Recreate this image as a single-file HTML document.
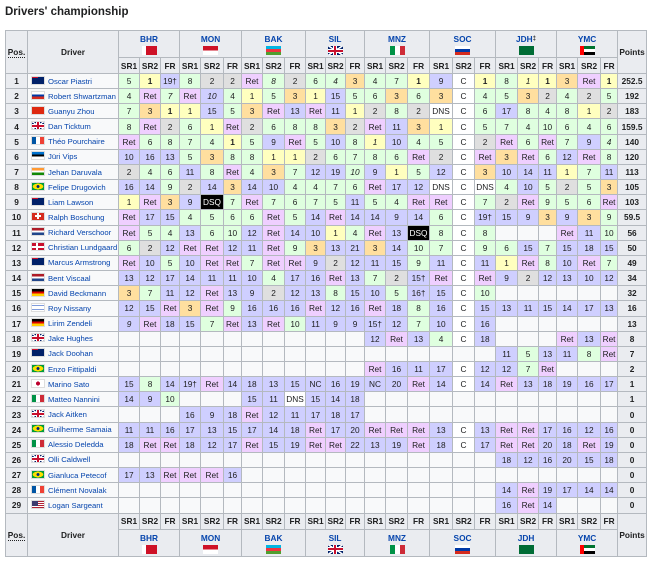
<!DOCTYPE html>
<html><head><meta charset="utf-8"><style>
*{margin:0;padding:0;box-sizing:border-box}
body{width:650px;height:562px;background:#fff;font-family:"Liberation Sans",Arial,sans-serif;color:#202122;overflow:hidden;position:relative}
h3{position:absolute;left:5px;top:6px;font-size:11.5px;font-weight:bold}
table{position:absolute;left:5px;top:30px;width:641px;border-collapse:collapse;table-layout:fixed;background:#f8f9fa;font-size:8.3px;line-height:10px}
td,th{border:1px solid #b4b9bf;text-align:center;padding:0;overflow:hidden;white-space:nowrap}
th{background:#eaecf0;font-weight:bold;font-size:8.3px}
tr.h1{height:27px} tr.h2{height:16px}
tbody tr{height:15.17px}
th.v{vertical-align:top;padding-top:3px;color:#0645ad;font-size:8.3px;line-height:10px;height:27px}
td.d{text-align:left;padding-left:3px;color:#0645ad;font-size:7.7px}
td.ps{font-weight:bold;background:#eaecf0}
td.pt{font-weight:bold;background:#eaecf0}
.g{background:#ffffbf}.s{background:#dfdfdf}.b{background:#ffdf9f}.p{background:#dfffdf}.n{background:#cfcfff}.r{background:#efcfff}.w{background:#fff}.k{background:#000;color:#fff}
i.f{display:inline-block;width:14px;height:9px;vertical-align:-1px;margin-right:3px;border:1px solid #ddd}
i.F{display:block;width:15px;height:9px;margin:2px auto 0}
.aus{background:linear-gradient(#c8102e,#c8102e) 0 0/6px 1px no-repeat,#012169}
.rus{background:linear-gradient(#fff 33%,#0039a6 33% 66%,#d52b1e 66%)}
.chn{background:#de2910}
.gbr{background:linear-gradient(#c8102e,#c8102e) center/100% 2px no-repeat,linear-gradient(#c8102e,#c8102e) center/2px 100% no-repeat,linear-gradient(#fff,#fff) center/100% 4px no-repeat,linear-gradient(#fff,#fff) center/4px 100% no-repeat,linear-gradient(33deg,transparent 45%,#fff 45% 55%,transparent 55%),linear-gradient(-33deg,transparent 45%,#fff 45% 55%,transparent 55%),#012169}
.fra{background:linear-gradient(to right,#0055a4 33%,#fff 33% 66%,#ef4135 66%)}
.est{background:linear-gradient(#0072ce 33%,#000 33% 66%,#fff 66%)}
.ind{background:linear-gradient(#f93 33%,#fff 33% 66%,#128807 66%)}
.bra{background:radial-gradient(circle,#002776 20%,transparent 22%),radial-gradient(ellipse 45% 42%,#fedf00 95%,transparent 100%),#009c3b}
.sui{background:linear-gradient(#fff,#fff) center/6px 2px no-repeat,linear-gradient(#fff,#fff) center/2px 6px no-repeat,#d52b1e}
.ned{background:linear-gradient(#ae1c28 33%,#fff 33% 66%,#21468b 66%)}
.den{background:linear-gradient(#fff,#fff) 0 50%/100% 2px no-repeat,linear-gradient(#fff,#fff) 4px 0/2px 100% no-repeat,#c8102e}
.ger{background:linear-gradient(#000 33%,#d00 33% 66%,#ffce00 66%)}
.isr{background:linear-gradient(#fff 12%,#0038b8 12% 24%,#fff 24% 76%,#0038b8 76% 88%,#fff 88%)}
.jpn{background:radial-gradient(circle,#bc002d 28%,#fff 31%)}
.ita{background:linear-gradient(to right,#009246 33%,#fff 33% 66%,#ce2b37 66%)}
.usa{background:linear-gradient(#3c3b6e,#3c3b6e) 0 0/6px 5px no-repeat,repeating-linear-gradient(#b22234 0 1px,#fff 1px 2px)}
.bhr{background:linear-gradient(to right,#fff 28%,#ce1126 28%)}
.mon{background:linear-gradient(#ce1126 50%,#fff 50%)}
.aze{background:linear-gradient(#00b5e2 33%,#ef3340 33% 66%,#509e2f 66%)}
.ksa{background:#006c35}
.uae{background:linear-gradient(to right,#ff0000 26%,transparent 26%),linear-gradient(#00732f 33%,#fff 33% 66%,#000 66%)}
</style></head><body>
<h3>Drivers' championship</h3>
<table>
<colgroup><col style="width:22px"><col style="width:91px">
<col style="width:21px"><col style="width:21px"><col style="width:19px">
<col style="width:21px"><col style="width:23px"><col style="width:18px">
<col style="width:21px"><col style="width:22px"><col style="width:21px">
<col style="width:20px"><col style="width:20px"><col style="width:19px">
<col style="width:21px"><col style="width:22px"><col style="width:22px">
<col style="width:23px"><col style="width:22px"><col style="width:21px">
<col style="width:22px"><col style="width:21px"><col style="width:18px">
<col style="width:21px"><col style="width:23px"><col style="width:17px">
<col style="width:29px"></colgroup>
<thead>
<tr class="h1"><th rowspan="2"><span style="border-bottom:1px dotted #202122">Pos.</span></th><th rowspan="2">Driver</th>
<th colspan="3" class="v">BHR<i class="F bhr"></i></th><th colspan="3" class="v">MON<i class="F mon"></i></th><th colspan="3" class="v">BAK<i class="F aze"></i></th><th colspan="3" class="v">SIL<i class="F gbr"></i></th><th colspan="3" class="v">MNZ<i class="F ita"></i></th><th colspan="3" class="v">SOC<i class="F rus"></i></th><th colspan="3" class="v">JDH<span style="font-size:6px;color:#202122;vertical-align:top">‡</span><i class="F ksa"></i></th><th colspan="3" class="v">YMC<i class="F uae"></i></th><th rowspan="2">Points</th></tr>
<tr class="h2"><th>SR1<th>SR2<th>FR<th>SR1<th>SR2<th>FR<th>SR1<th>SR2<th>FR<th>SR1<th>SR2<th>FR<th>SR1<th>SR2<th>FR<th>SR1<th>SR2<th>FR<th>SR1<th>SR2<th>FR<th>SR1<th>SR2<th>FR</tr>
</thead>
<tbody>
<tr><td class=ps>1<td class=d><i class="f aus"></i>Oscar Piastri<td class=p>5<td class=g><b>1</b><td class=n>19†<td class=p>8<td class=s>2<td class=s>2<td class=r>Ret<td class=p><i>8</i><td class=s>2<td class=p>6<td class=p><i>4</i><td class=b>3<td class=p>4<td class=p>7<td class=g><b>1</b><td class=n>9<td class=w>C<td class=g><b>1</b><td class=p>8<td class=g><i>1</i><td class=g><b>1</b><td class=b>3<td class=r>Ret<td class=g><b>1</b><td class=pt>252.5
<tr><td class=ps>2<td class=d><i class="f rus"></i>Robert Shwartzman<td class=p>4<td class=r>Ret<td class=p><i>7</i><td class=r>Ret<td class=n><i>10</i><td class=p>4<td class=g>1<td class=p>5<td class=b>3<td class=g>1<td class=n>15<td class=p>5<td class=p>6<td class=b>3<td class=p>6<td class=b>3<td class=w>C<td class=p>4<td class=p>5<td class=b>3<td class=s>2<td class=p>4<td class=s>2<td class=p>5<td class=pt>192
<tr><td class=ps>3<td class=d><i class="f chn"></i>Guanyu Zhou<td class=p>7<td class=b>3<td class=g><b>1</b><td class=g>1<td class=n>15<td class=p>5<td class=b>3<td class=r>Ret<td class=n>13<td class=r>Ret<td class=n>11<td class=g>1<td class=s>2<td class=p>8<td class=s>2<td class=w>DNS<td class=w>C<td class=p>6<td class=n>17<td class=p>8<td class=p>4<td class=p>8<td class=g>1<td class=s>2<td class=pt>183
<tr><td class=ps>4<td class=d><i class="f gbr"></i>Dan Ticktum<td class=p>8<td class=r>Ret<td class=s>2<td class=p>6<td class=g>1<td class=r>Ret<td class=s>2<td class=p>6<td class=p>8<td class=p>8<td class=b>3<td class=s>2<td class=r>Ret<td class=n>11<td class=b>3<td class=g>1<td class=w>C<td class=p>5<td class=p>7<td class=p>4<td class=p>10<td class=p>6<td class=p>4<td class=p>6<td class=pt>159.5
<tr><td class=ps>5<td class=d><i class="f fra"></i>Théo Pourchaire<td class=r>Ret<td class=p>6<td class=p>8<td class=p>7<td class=p>4<td class=g><b>1</b><td class=p>5<td class=n>9<td class=r>Ret<td class=p>5<td class=n>10<td class=p>8<td class=g><i>1</i><td class=n>10<td class=p>4<td class=p>5<td class=w>C<td class=s>2<td class=r>Ret<td class=p>6<td class=r>Ret<td class=p>7<td class=n>9<td class=p><i>4</i><td class=pt>140
<tr><td class=ps>6<td class=d><i class="f est"></i>Jüri Vips<td class=n>10<td class=n>16<td class=n>13<td class=p>5<td class=b>3<td class=p>8<td class=p>8<td class=g>1<td class=g>1<td class=s>2<td class=p>6<td class=p>7<td class=p>8<td class=p>6<td class=r>Ret<td class=s>2<td class=w>C<td class=r>Ret<td class=b>3<td class=r>Ret<td class=p>6<td class=n>12<td class=r>Ret<td class=p>8<td class=pt>120
<tr><td class=ps>7<td class=d><i class="f ind"></i>Jehan Daruvala<td class=s>2<td class=p>4<td class=p>6<td class=n>11<td class=p>8<td class=r>Ret<td class=p>4<td class=b>3<td class=p>7<td class=n>12<td class=n>19<td class=p><i>10</i><td class=n>9<td class=g>1<td class=p>5<td class=n>12<td class=w>C<td class=b>3<td class=n>10<td class=n>14<td class=n>11<td class=g>1<td class=p>7<td class=n>11<td class=pt>113
<tr><td class=ps>8<td class=d><i class="f bra"></i>Felipe Drugovich<td class=n>16<td class=n>14<td class=p>9<td class=s>2<td class=n>14<td class=b>3<td class=n>14<td class=n>10<td class=p>4<td class=p>4<td class=p>7<td class=p>6<td class=r>Ret<td class=n>17<td class=n>12<td class=w>DNS<td class=w>C<td class=w>DNS<td class=p>4<td class=n>10<td class=p>5<td class=s>2<td class=p>5<td class=b>3<td class=pt>105
<tr><td class=ps>9<td class=d><i class="f aus"></i>Liam Lawson<td class=g>1<td class=r>Ret<td class=b>3<td class=n>9<td class=k>DSQ<td class=p>7<td class=r>Ret<td class=p>7<td class=p>6<td class=p>7<td class=p>5<td class=n>11<td class=p>5<td class=p>4<td class=r>Ret<td class=r>Ret<td class=w>C<td class=p>7<td class=s>2<td class=r>Ret<td class=p>9<td class=p>5<td class=p>6<td class=r>Ret<td class=pt>103
<tr><td class=ps>10<td class=d><i class="f sui"></i>Ralph Boschung<td class=r>Ret<td class=n>17<td class=n>15<td class=p>4<td class=p>5<td class=p>6<td class=p>6<td class=r>Ret<td class=p>5<td class=n>14<td class=r>Ret<td class=n>14<td class=n>14<td class=n>9<td class=n>14<td class=p>6<td class=w>C<td class=n>19†<td class=n>15<td class=n>9<td class=b>3<td class=n>9<td class=b>3<td class=p>9<td class=pt>59.5
<tr><td class=ps>11<td class=d><i class="f ned"></i>Richard Verschoor<td class=r>Ret<td class=p>5<td class=p>4<td class=n>13<td class=p>6<td class=p>10<td class=n>12<td class=r>Ret<td class=n>14<td class=n>10<td class=g>1<td class=p>4<td class=r>Ret<td class=n>13<td class=k>DSQ<td class=p>8<td class=w>C<td class=p>8<td><td><td><td class=r>Ret<td class=n>11<td class=p>10<td class=pt>56
<tr><td class=ps>12<td class=d><i class="f den"></i>Christian Lundgaard<td class=p>6<td class=s>2<td class=n>12<td class=r>Ret<td class=r>Ret<td class=n>12<td class=n>11<td class=r>Ret<td class=p>9<td class=b>3<td class=n>13<td class=n>21<td class=b>3<td class=n>14<td class=p>10<td class=p>7<td class=w>C<td class=p>9<td class=p>6<td class=n>15<td class=p>7<td class=n>15<td class=n>18<td class=n>15<td class=pt>50
<tr><td class=ps>13<td class=d><i class="f aus"></i>Marcus Armstrong<td class=r>Ret<td class=n>10<td class=p>5<td class=n>10<td class=r>Ret<td class=r>Ret<td class=p>7<td class=r>Ret<td class=r>Ret<td class=n>9<td class=s>2<td class=n>12<td class=n>11<td class=n>15<td class=p>9<td class=n>11<td class=w>C<td class=n>11<td class=g>1<td class=r>Ret<td class=p>8<td class=n>10<td class=r>Ret<td class=p>7<td class=pt>49
<tr><td class=ps>14<td class=d><i class="f ned"></i>Bent Viscaal<td class=n>13<td class=n>12<td class=n>17<td class=n>14<td class=n>11<td class=n>11<td class=n>10<td class=p>4<td class=n>17<td class=n>16<td class=r>Ret<td class=n>13<td class=p>7<td class=s>2<td class=n>15†<td class=r>Ret<td class=w>C<td class=r>Ret<td class=n>9<td class=s>2<td class=n>12<td class=n>13<td class=n>10<td class=n>12<td class=pt>34
<tr><td class=ps>15<td class=d><i class="f ger"></i>David Beckmann<td class=b>3<td class=p>7<td class=n>11<td class=n>12<td class=r>Ret<td class=n>13<td class=n>9<td class=s>2<td class=n>12<td class=n>13<td class=p>8<td class=n>15<td class=n>10<td class=p>5<td class=n>16†<td class=n>15<td class=w>C<td class=p>10<td><td><td><td><td><td><td class=pt>32
<tr><td class=ps>16<td class=d><i class="f isr"></i>Roy Nissany<td class=n>12<td class=n>15<td class=r>Ret<td class=b>3<td class=r>Ret<td class=p>9<td class=n>16<td class=n>16<td class=n>16<td class=r>Ret<td class=n>12<td class=n>16<td class=r>Ret<td class=n>18<td class=p>8<td class=n>16<td class=w>C<td class=n>15<td class=n>13<td class=n>11<td class=n>15<td class=n>14<td class=n>17<td class=n>13<td class=pt>16
<tr><td class=ps>17<td class=d><i class="f ger"></i>Lirim Zendeli<td class=n><i>9</i><td class=r>Ret<td class=n>18<td class=n>15<td class=p>7<td class=r>Ret<td class=n>13<td class=r>Ret<td class=p>10<td class=n>11<td class=n>9<td class=n>9<td class=n>15†<td class=n>12<td class=p>7<td class=n>10<td class=w>C<td class=n>16<td><td><td><td><td><td><td class=pt>13
<tr><td class=ps>18<td class=d><i class="f gbr"></i>Jake Hughes<td><td><td><td><td><td><td><td><td><td><td><td><td class=n>12<td class=r>Ret<td class=n>13<td class=p>4<td class=w>C<td class=n>18<td><td><td><td class=r>Ret<td class=n>13<td class=r>Ret<td class=pt>8
<tr><td class=ps>19<td class=d><i class="f aus"></i>Jack Doohan<td><td><td><td><td><td><td><td><td><td><td><td><td><td><td><td><td><td><td class=n>11<td class=p>5<td class=n>13<td class=n>11<td class=p>8<td class=r>Ret<td class=pt>7
<tr><td class=ps>20<td class=d><i class="f bra"></i>Enzo Fittipaldi<td><td><td><td><td><td><td><td><td><td><td><td><td class=r>Ret<td class=n>16<td class=n>11<td class=n>17<td class=w>C<td class=n>12<td class=n>12<td class=p>7<td class=r>Ret<td><td><td><td class=pt>2
<tr><td class=ps>21<td class=d><i class="f jpn"></i>Marino Sato<td class=n>15<td class=p>8<td class=n>14<td class=n>19†<td class=r>Ret<td class=n>14<td class=n>18<td class=n>13<td class=n>15<td class=n>NC<td class=n>16<td class=n>19<td class=n>NC<td class=n>20<td class=r>Ret<td class=n>14<td class=w>C<td class=n>14<td class=r>Ret<td class=n>13<td class=n>18<td class=n>19<td class=n>16<td class=n>17<td class=pt>1
<tr><td class=ps>22<td class=d><i class="f ita"></i>Matteo Nannini<td class=n>14<td class=n>9<td class=p>10<td><td><td><td class=n>15<td class=n>11<td class=w>DNS<td class=n>15<td class=n>14<td class=n>18<td><td><td><td><td><td><td><td><td><td><td><td><td class=pt>1
<tr><td class=ps>23<td class=d><i class="f gbr"></i>Jack Aitken<td><td><td><td class=n>16<td class=n>9<td class=n>18<td class=r>Ret<td class=n>12<td class=n>11<td class=n>17<td class=n>18<td class=n>17<td><td><td><td><td><td><td><td><td><td><td><td><td class=pt>0
<tr><td class=ps>24<td class=d><i class="f bra"></i>Guilherme Samaia<td class=n>11<td class=n>11<td class=n>16<td class=n>17<td class=n>13<td class=n>15<td class=n>17<td class=n>14<td class=n>18<td class=r>Ret<td class=n>17<td class=n>20<td class=r>Ret<td class=r>Ret<td class=r>Ret<td class=n>13<td class=w>C<td class=n>13<td class=r>Ret<td class=r>Ret<td class=n>17<td class=n>16<td class=n>12<td class=n>16<td class=pt>0
<tr><td class=ps>25<td class=d><i class="f ita"></i>Alessio Deledda<td class=n>18<td class=r>Ret<td class=r>Ret<td class=n>18<td class=n>12<td class=n>17<td class=r>Ret<td class=n>15<td class=n>19<td class=r>Ret<td class=r>Ret<td class=n>22<td class=n>13<td class=n>19<td class=r>Ret<td class=n>18<td class=w>C<td class=n>17<td class=r>Ret<td class=r>Ret<td class=n>20<td class=n>18<td class=r>Ret<td class=n>19<td class=pt>0
<tr><td class=ps>26<td class=d><i class="f gbr"></i>Olli Caldwell<td><td><td><td><td><td><td><td><td><td><td><td><td><td><td><td><td><td><td class=n>18<td class=n>12<td class=n>16<td class=n>20<td class=n>15<td class=n>18<td class=pt>0
<tr><td class=ps>27<td class=d><i class="f bra"></i>Gianluca Petecof<td class=n>17<td class=n>13<td class=r>Ret<td class=r>Ret<td class=r>Ret<td class=n>16<td><td><td><td><td><td><td><td><td><td><td><td><td><td><td><td><td><td><td class=pt>0
<tr><td class=ps>28<td class=d><i class="f fra"></i>Clément Novalak<td><td><td><td><td><td><td><td><td><td><td><td><td><td><td><td><td><td><td class=n>14<td class=r>Ret<td class=n>19<td class=n>17<td class=n>14<td class=n>14<td class=pt>0
<tr><td class=ps>29<td class=d><i class="f usa"></i>Logan Sargeant<td><td><td><td><td><td><td><td><td><td><td><td><td><td><td><td><td><td><td class=n>16<td class=r>Ret<td class=n>14<td><td><td><td class=pt>0
</tbody>
<tfoot>
<tr class="h2"><th rowspan="2"><span style="border-bottom:1px dotted #202122">Pos.</span></th><th rowspan="2">Driver</th><th>SR1<th>SR2<th>FR<th>SR1<th>SR2<th>FR<th>SR1<th>SR2<th>FR<th>SR1<th>SR2<th>FR<th>SR1<th>SR2<th>FR<th>SR1<th>SR2<th>FR<th>SR1<th>SR2<th>FR<th>SR1<th>SR2<th>FR<th rowspan="2">Points</th></tr>
<tr class="h1"><th colspan="3" class="v">BHR<i class="F bhr"></i></th><th colspan="3" class="v">MON<i class="F mon"></i></th><th colspan="3" class="v">BAK<i class="F aze"></i></th><th colspan="3" class="v">SIL<i class="F gbr"></i></th><th colspan="3" class="v">MNZ<i class="F ita"></i></th><th colspan="3" class="v">SOC<i class="F rus"></i></th><th colspan="3" class="v">JDH<i class="F ksa"></i></th><th colspan="3" class="v">YMC<i class="F uae"></i></th></tr>
</tfoot>
</table>
</body></html>
